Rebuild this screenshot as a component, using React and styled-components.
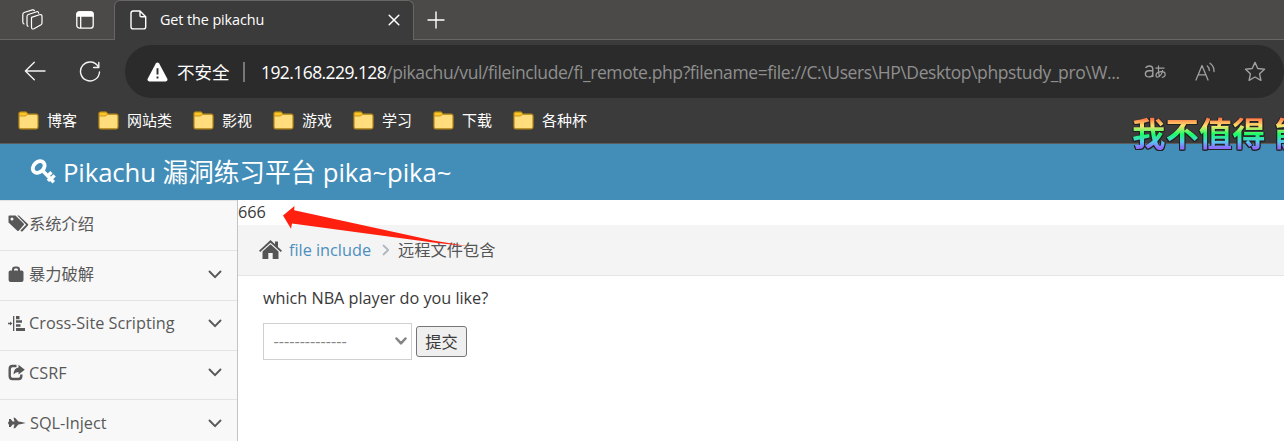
import React from "react";
import styled, { createGlobalStyle } from "styled-components";

const GlobalStyle = createGlobalStyle`
  *, *::before, *::after { box-sizing: border-box; }
  html, body { margin: 0; overflow: hidden; background: #fff; }
  svg { display: block; flex: none; }
`;

const ui = `"Open Sans", "Noto Sans CJK SC", sans-serif`;

const Window = styled.div`
  position: relative;
  width: 1284px;
  height: 441px;
  overflow: hidden;
  display: flex;
  flex-direction: column;
  font-family: ${ui};
  background: #fff;
`;

/* browser chrome */
const TabStrip = styled.div`
  height: 40px;
  flex: none;
  display: flex;
  background: #4b4a48;
  color: #fff;
`;
const StripSide = styled.div`
  display: flex;
  align-items: center;
  border-bottom: 1px solid #686766;
`;
const StripTools = styled(StripSide)`
  width: 114px;
  padding-left: 21px;
  gap: 32px;
`;
const StripRest = styled(StripSide)`
  flex: 1;
  padding-left: 13px;
`;
const Tab = styled.div`
  width: 300px;
  display: flex;
  align-items: center;
  padding: 0 13px 1px 15px;
  background: #3b3b3b;
  border: 1px solid #686766;
  border-bottom: 0;
  border-radius: 6px 6px 0 0;
`;
const TabTitle = styled.span`
  flex: 1;
  margin-left: 13px;
  font-size: 14.4px;
  line-height: 20px;
  letter-spacing: -0.1px;
`;

const Toolbar = styled.div`
  height: 61px;
  flex: none;
  display: flex;
  align-items: center;
  padding: 0 0 0 24px;
  background: #3b3b3b;
  color: #f2f2f2;
`;
const ReloadSlot = styled.div`
  margin: 2px 23px 0 33px;
`;
const AddressBar = styled.div`
  width: 1159px;
  height: 53px;
  display: flex;
  align-items: center;
  padding-left: 22px;
  margin-top: 2px;
  border-radius: 27px;
  background: #2b2b2b;
`;
const Security = styled.span`
  width: 55px;
  margin-left: 9px;
  font-size: 17.5px;
  line-height: 24px;
  color: #fff;
  white-space: nowrap;
`;
const Divider = styled.i`
  width: 2px;
  height: 20px;
  margin: 0 16px 0 11px;
  background: #777;
`;
const Url = styled.span`
  width: 883px;
  font-size: 17.5px;
  line-height: 24px;
  letter-spacing: -0.4px;
  white-space: nowrap;
  color: #8f8f8f;
`;
const Host = styled.b`
  font-weight: 400;
  letter-spacing: -0.58px;
  color: #fff;
`;
const AddressActions = styled.div`
  display: flex;
  align-items: center;
  gap: 28px;
  color: #a0a0a0;
`;

const Bookmarks = styled.div`
  height: 43px;
  flex: none;
  display: flex;
  padding: 0 0 4px 18px;
  align-items: center;
  background: #3b3b3b;
  border-bottom: 1px solid #5c5c5a;
`;
const Bookmark = styled.div`
  width: ${(p) => p.$width}px;
  display: flex;
  align-items: center;
  gap: 8px;
  font-size: 15px;
  line-height: 22px;
  color: #fff;
  white-space: nowrap;
`;

/* page */
const Navbar = styled.header`
  height: 56px;
  flex: none;
  display: flex;
  align-items: center;
  gap: 7px;
  padding: 0 0 1px 30px;
  background: #438eb9;
  color: #fff;
  font-size: 25.75px;
  line-height: 36px;
  white-space: nowrap;
`;
const Brand = styled.span`
  letter-spacing: -0.12px;
`;
const Body = styled.div`
  flex: 1;
  min-height: 0;
  display: flex;
`;
const Sidebar = styled.nav`
  width: 238px;
  flex: none;
  border-right: 1px solid #c4c4c4;
  background: #f8f8f8;
  overflow: hidden;
`;
const MenuItem = styled.div`
  height: ${(p) => p.$height || 50}px;
  display: flex;
  align-items: center;
  padding: 0 15px ${(p) => (p.$raised ? 5 : 3)}px 8px;
  border-top: 1px solid #e3e3e3;
  font-size: 16.25px;
  line-height: 22px;
  color: #585858;
`;
const MenuIcon = styled.span`
  width: ${(p) => p.$width || 21}px;
  flex: none;
`;
const MenuLabel = styled.span`
  flex: 1;
  white-space: nowrap;
`;
const Main = styled.main`
  flex: 1;
  font-size: 16.25px;
  line-height: 25px;
  color: #393939;
`;
const Output = styled.div`
  height: 25px;
  letter-spacing: -0.1px;
`;
const Breadcrumbs = styled.div`
  height: 51px;
  display: flex;
  align-items: center;
  padding-left: 21px;
  background: #f4f4f4;
  border-bottom: 1px solid #e5e5e5;
  color: #555;
`;
const Crumb = styled.span`
  margin: 0 ${(p) => p.$gap || 0}px 0 ${(p) => p.$lead || 7}px;
  color: ${(p) => (p.$link ? "#4c8fbd" : "#555")};
`;
const Separator = styled.span`
  color: #b2b6bf;
`;
const Content = styled.section`
  padding: 10px 25px;
`;
const Question = styled.p`
  margin: 0 0 12px;
  letter-spacing: -0.03px;
`;
const Form = styled.div`
  display: flex;
  align-items: center;
  gap: 4px;
`;
const Picker = styled.div`
  width: 149px;
  height: 37px;
  display: flex;
  align-items: center;
  justify-content: space-between;
  padding: 0 4px 0 9.5px;
  border: 1px solid #d0d0d0;
  color: #858585;
`;
const Submit = styled.button`
  width: 51px;
  height: 31px;
  padding: 0;
  border: 1px solid #767676;
  border-radius: 3px;
  background: #efefef;
  color: #393939;
  font: 16.25px/24px ${ui};
`;
const Arrow = styled.svg`
  position: absolute;
  left: 283px;
  top: 204px;
`;
const Danmaku = styled.div`
  position: absolute;
  left: 1132px;
  top: 113px;
  font-size: 33.4px;
  font-weight: 700;
  line-height: 40px;
  white-space: nowrap;
  color: transparent;
  background: linear-gradient(#ff7a4a 14%, #ffe36b 32%, #16ff68 53%, #54c9ee 72%, #8c70ff 86%);
  -webkit-background-clip: text;
  background-clip: text;
  filter: drop-shadow(1px 0 0.5px #222) drop-shadow(-1px 0 0.5px #222) drop-shadow(0 1px 0.5px #222);
`;

const Stroke = ({ w, h, d, width = 1.4 }) => (
  <svg width={w} height={h} viewBox={`0 0 ${w} ${h}`} fill="none" stroke="currentColor" strokeWidth={width} strokeLinecap="round" strokeLinejoin="round">
    <path d={d} />
  </svg>
);
const Solid = ({ w, h, d }) => (
  <svg width={w} height={h} viewBox={`0 0 ${w} ${h}`} fill="currentColor" fillRule="evenodd">
    <path d={d} />
  </svg>
);

const Chevron = () => <Stroke w={14} h={9} width={1.9} d="M1.5 1.5 7 7.2 12.5 1.5" />;

const Folder = () => (
  <svg width="21" height="19" viewBox="0 0 21 19">
    <path d="M1 4V2.5Q1 1 2.5 1H8l2 2.2h8q2 0 2 2V16q0 1.8-1.8 1.8H2.8Q1 17.8 1 16Z" fill="#ffdc7c" stroke="#b98a16" strokeWidth="1.2" />
    <path d="M1.3 5V2.8Q1.3 1.2 2.8 1.2H8L9.6 3 7.7 5Z" fill="#fbc526" stroke="#b98a16" strokeWidth=".8" />
  </svg>
);

const bookmarks = [["博客", 80], ["网站类", 95], ["影视", 80], ["游戏", 80], ["学习", 80], ["下载", 80], ["各种杯", 80]];

const menu = [
  {
    label: "系统介绍",
    icon: <Solid w={21} h={18} d="M.5 1.2Q.5.5 1.3.5H7.5L15.7 8.6q.7.7 0 1.4l-5 5.7q-.7.7-1.4 0L.5 7.6ZM4 2.4a1.5 1.5 0 1 0 0 3 1.5 1.5 0 0 0 0-3ZM9.3.5h1.6l9 8.4q.8.8 0 1.6l-5.3 5.7q-.7.7-1.6 0l-.5-.6 5.6-5.8Z" />,
  },
  {
    label: "暴力破解",
    expandable: true,
    icon: <Solid w={16} h={17} d="M4 4.5V3.6Q4 .5 7 .5h2q3 0 3 3.1v.9h1.7q1.8 0 1.8 1.8V14q0 2-2 2H2.6Q.6 16 .6 14V6.3q0-1.8 1.8-1.8ZM6 4.5h4V4Q10 2.6 8.6 2.6H7.4Q6 2.6 6 4Z" />,
  },
  {
    label: "Cross-Site Scripting",
    expandable: true,
    raised: true,
    icon: <Solid w={18} h={17} d="M5 1h1.3v15H5ZM0 7.8h2V6.4l2.4 2.1L2 10.6V9.2H0ZM8 1h3.5v3.2H8ZM8 5.2h6v2.6H8ZM8 9.2h4.5v2.6H8ZM8 13h9v3H8Z" />,
  },
  {
    label: "CSRF",
    expandable: true,
    raised: true,
    height: 49,
    icon: (
      <svg width="17" height="17" viewBox="0 0 17 17" fill="none" stroke="currentColor">
        <path d="M8.5 2H4.5Q1.7 2 1.7 5v7q0 3 2.8 3h6q2.8 0 2.8-3v-1.5" strokeWidth="2.4" />
        <path d="m10.5.8 6.3 4.9-6.3 4.8V7.9Q7.5 7.7 5.6 10.4q.1-6.3 4.9-6.9Z" fill="currentColor" stroke="none" />
      </svg>
    ),
  },
  {
    label: "SQL-Inject",
    expandable: true,
    iconWidth: 22,
    icon: <Solid w={18} h={14} d="M1 3h1.7l2 2.6h1.8L5.5 1.7H7l3.4 3.9 3.2.4 4.1 1-4.1 1-3.2.4L7 12.3H5.5l1-3.9H4.7L2.7 11H1V8.2H.2V5.8H1Z" />,
  },
];

export default function App() {
  return (
    <Window>
      <GlobalStyle />
      <TabStrip>
        <StripTools>
          <Stroke w={23} h={22} width={1.2} d="M10.5 8.4 18.4 5.8Q21 5 21 7.5V14q0 1.2-1 1.8l-7 3.9q-2.5 1-2.5-1.4V10q0-1.2 0-1.6ZM7 17.3q-1-.5-1-1.8V7.5Q6 6 7.3 5.5L15.8 2.7q1.7-.4 1.9 1.5M3 15q-1.2-.5-1.2-2V5.4q0-1.4 1.3-1.9L11.4.9q1.5-.4 2 .8" />
          <svg width="18" height="18" viewBox="0 0 18 18" fill="none" stroke="#fff" strokeWidth="1.3">
            <rect x=".8" y=".8" width="16.4" height="16.4" rx="2.8" />
            <path d="M1 3Q1 1 3 1h12q2 0 2 2v2H1Z" fill="#fff" />
            <path d="M4.7 5v12" />
          </svg>
        </StripTools>
        <Tab>
          <Stroke w={17} h={20} d="M3.2 1H10l5.7 5.7v10q0 2.2-2.2 2.2H3.2Q1 18.9 1 16.7V3.2Q1 1 3.2 1ZM10 1v4.5q0 1.2 1.2 1.2h4.5" />
          <TabTitle>Get the pikachu</TabTitle>
          <Stroke w={12} h={12} width={1.5} d="m1.2 1.2 9.6 9.6m0-9.6-9.6 9.6" />
        </Tab>
        <StripRest>
          <Stroke w={18} h={18} d="M9 1v16M1 9h16" />
        </StripRest>
      </TabStrip>
      <Toolbar>
        <Stroke w={22} h={20} width={1.4} d="M21 10H1.4M10.3 1.2 1.4 10l8.9 8.8" />
        <ReloadSlot>
          <Stroke w={23} h={22} width={1.4} d="M19.4 6A9.5 9.5 0 1 0 20.5 11M19.8 1.5V6.5h-5.2" />
        </ReloadSlot>
        <AddressBar>
          <svg width="21" height="20" viewBox="0 0 21 20">
            <path d="M8.8 1.5q1.7-2.2 3.4 0l8.1 15.3q.8 2.2-1.4 2.7H2.1Q-.1 19 .7 16.8Z" fill="#fff" />
            <path d="M10.5 6.3v6.2m0 2v2" stroke="#2b2b2b" strokeWidth="1.9" />
          </svg>
          <Security>不安全</Security>
          <Divider />
          <Url>
            <Host>192.168.229.128</Host>
            {"/pikachu/vul/fileinclude/fi_remote.php?filename=file://C:\\Users\\HP\\Desktop\\phpstudy_pro\\W..."}
          </Url>
          <AddressActions>
            <svg width="23" height="16" viewBox="0 0 23 16" fill="none" stroke="currentColor" strokeWidth="1.4">
              <path d="M1.5 3.8Q3 2 5.5 2q3.3 0 3.3 3.3V13M8.8 6.8H5Q1.4 7 1.4 10T5 12.9q3.8 0 3.8-4" />
              <path d="M11.5 4.2h9M14.5 1.5q-.5 7 1 11.5M18.6 6q-1 6-4.6 7-2 .3-2-1.7 0-3 5-3.6 4-.4 4.2 2.5.1 2.6-3.4 3.3" strokeWidth="1.2" />
            </svg>
            <Stroke w={21} h={20} width={1.3} d="M1 18 7 3.5 13 18M3.2 12.8h7.6M12.3 4q2 1.7 2 4.5M15 1.2q4.2 3 4 8.3" />
            <Stroke w={22} h={21} width={1.4} d="m11 1.4 2.8 6.1 6.7.8-4.9 4.5 1.3 6.5L11 16l-5.9 3.3 1.3-6.5-4.9-4.5 6.7-.8Z" />
          </AddressActions>
        </AddressBar>
      </Toolbar>
      <Bookmarks>
        {bookmarks.map(([name, width]) => (
          <Bookmark key={name} $width={width}>
            <Folder />
            <span>{name}</span>
          </Bookmark>
        ))}
      </Bookmarks>
      <Navbar>
        <svg width="26" height="25" viewBox="0 0 26 25" fill="none" stroke="currentColor">
          <ellipse cx="8.7" cy="8" rx="6.6" ry="5" transform="rotate(-43 8.7 8)" strokeWidth="3.8" />
          <path d="m12.5 11.5 11.3 11.8M20.3 19.5 17.9 21.9M21.5 13.2l-4.6 4.2M24.6 16.4l-4.2 4.1" strokeWidth="3.4" />
        </svg>
        <Brand>Pikachu 漏洞练习平台 pika~pika~</Brand>
      </Navbar>
      <Body>
        <Sidebar>
          {menu.map((m) => (
            <MenuItem key={m.label} $height={m.height} $raised={m.raised}>
              <MenuIcon $width={m.iconWidth}>{m.icon}</MenuIcon>
              <MenuLabel>{m.label}</MenuLabel>
              {m.expandable && <Chevron />}
            </MenuItem>
          ))}
        </Sidebar>
        <Main>
          <Output>666</Output>
          <Breadcrumbs>
            <Solid w={23} h={20} d="M11.5 0 16 4.2V1.5h3v5.4l4 3.8-1.2 1.3L11.5 2.7 1.2 12 0 10.7ZM11.5 4.3l8 7.3V19h-5.8v-6H9.3v6H3.5v-7.4Z" />
            <Crumb $link $gap={11}>file include</Crumb>
            <Separator>
              <Stroke w={8} h={12} width={1.8} d="m1.5 1.5 4.7 4.5-4.7 4.5" />
            </Separator>
            <Crumb $lead={8}>远程文件包含</Crumb>
          </Breadcrumbs>
          <Content>
            <Question>which NBA player do you like?</Question>
            <Form>
              <Picker>
                <span>--------------</span>
                <Stroke w={12} h={9} width={2.5} d="M1.5 1.5 6 6.4l4.5-4.9" />
              </Picker>
              <Submit>提交</Submit>
            </Form>
          </Content>
        </Main>
      </Body>
      <Arrow width="188" height="44" viewBox="0 0 188 44">
        <path d="M0 11.5 11.5 2l-.3 4.2L150 36.5 187 42.6 150 38.5 9 19.5 8 24.7Z" fill="#ff2010" />
      </Arrow>
      <Danmaku>我不值得 能</Danmaku>
    </Window>
  );
}
